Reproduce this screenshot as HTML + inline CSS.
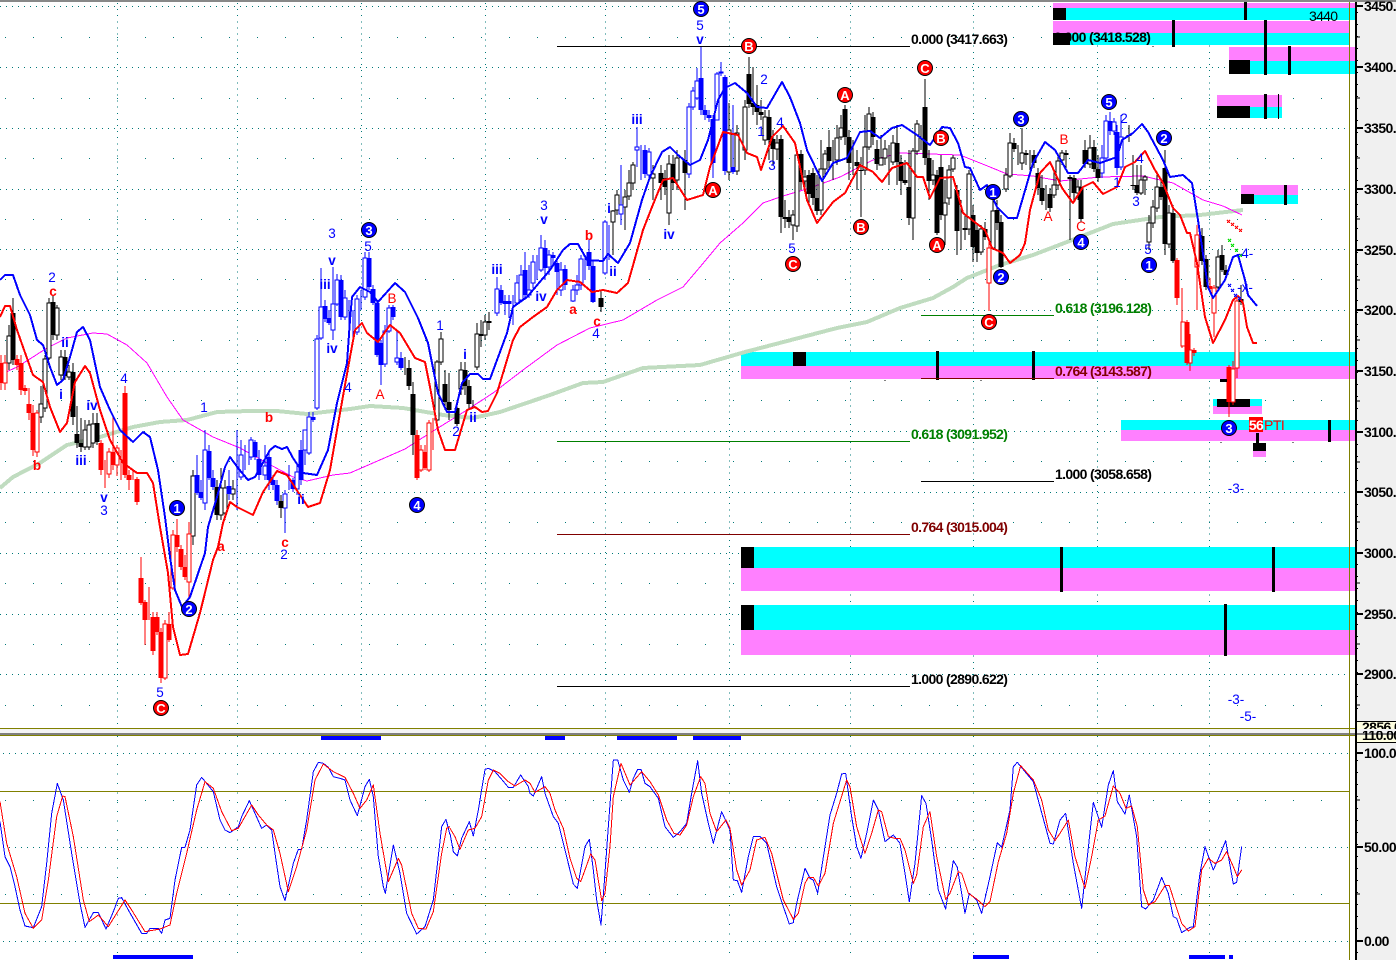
<!DOCTYPE html>
<html><head><meta charset="utf-8"><title>Chart</title>
<style>
html,body{margin:0;padding:0;background:#fff;width:1396px;height:960px;overflow:hidden}
svg{display:block}
text{font-family:"Liberation Sans",sans-serif;font-size:13.5px}
.bl{fill:#0000ff;text-anchor:middle;transform:translateY(1px)}
.rd{fill:#ff0000;text-anchor:middle;transform:translateY(1px)}
.b{font-weight:bold}
.f{font-weight:bold;font-size:14px;letter-spacing:-.65px}
.c{fill:#fff;font-weight:bold;text-anchor:middle;font-size:13px}
.ax{font-size:14px;font-weight:bold;fill:#000;letter-spacing:-.6px}
.g path,.g rect,.g polyline,.g line{shape-rendering:crispEdges}
</style></head><body>
<svg class="g" width="1396" height="960" viewBox="0 0 1396 960" xmlns="http://www.w3.org/2000/svg">
<rect width="1396" height="960" fill="#fff"/>
<!-- axis strip -->
<rect x="1357" y="0" width="39" height="960" fill="#f0f0f0"/>
<!-- main grid -->
<path fill="none" stroke="#007878" stroke-dasharray="1 5" d="M0 6.5H1349M0 67.5H1349M0 128.5H1349M0 189.5H1349M0 249.5H1349M0 310.5H1349M0 371.5H1349M0 431.5H1349M0 492.5H1349M0 553.5H1349M0 614.5H1349M0 674.5H1349"/>
<path fill="none" stroke="#007878" stroke-dasharray="1 27" d="M5 37.5H1349M5 98.5H1349M5 158.5H1349M5 219.5H1349M5 279.5H1349M5 340.5H1349M5 400.5H1349M5 461.5H1349M5 522.5H1349M5 583.5H1349M5 644.5H1349M5 705.5H1349"/>
<path fill="none" stroke="#007878" stroke-dasharray="1 5.1" d="M117.5 3V728M237.5 3V728M361.5 3V728M485.5 3V728M605.5 3V728M729.5 3V728M850.5 3V728M973.5 3V728M1097.5 3V728M1209.5 3V728"/>
<!-- lower grid -->
<path fill="none" stroke="#007878" stroke-dasharray="1 5" d="M3 753.5H1349M3 847.5H1349M3 941.5H1349"/>
<path fill="none" stroke="#007878" stroke-dasharray="1 27" d="M5 800.5H1349M5 894.5H1349"/>
<path fill="none" stroke="#007878" stroke-dasharray="1 8.4" d="M117.5 736V960M237.5 736V960M361.5 736V960M485.5 736V960M605.5 736V960M729.5 736V960M850.5 736V960M973.5 736V960M1097.5 736V960M1209.5 736V960"/>
<path fill="none" stroke="#808000" d="M0 791.5H1349M0 903.5H1349"/>

<!-- zones -->
<rect x="1053" y="3" width="303" height="5" fill="#ff80ff"/><rect x="1053" y="8" width="303" height="12" fill="#00ffff"/><rect x="1053" y="8" width="13" height="12" fill="#000"/>
<rect x="1053" y="21" width="297" height="12" fill="#ff80ff"/><rect x="1053" y="33" width="297" height="12" fill="#00ffff"/><rect x="1053" y="33" width="17" height="12" fill="#000"/>
<rect x="1229" y="47" width="127" height="14" fill="#ff80ff"/><rect x="1229" y="61" width="127" height="13" fill="#00ffff"/><rect x="1229" y="60" width="21" height="14" fill="#000"/>
<rect x="1217" y="95" width="65" height="12" fill="#ff80ff"/><rect x="1217" y="107" width="65" height="11" fill="#00ffff"/><rect x="1217" y="106" width="33" height="12" fill="#000"/>
<rect x="1241" y="185" width="57" height="10" fill="#ff80ff"/><rect x="1241" y="195" width="57" height="9" fill="#00ffff"/><rect x="1241" y="194" width="13" height="10" fill="#000"/>
<rect x="741" y="352" width="615" height="14" fill="#00ffff"/><rect x="741" y="366" width="615" height="13" fill="#ff80ff"/><rect x="793" y="352" width="13" height="14" fill="#000"/>
<rect x="1121" y="420" width="235" height="10" fill="#00ffff"/><rect x="1121" y="430" width="235" height="11" fill="#ff80ff"/>
<rect x="1213" y="399" width="49" height="7" fill="#00ffff"/><rect x="1213" y="406" width="49" height="8" fill="#ff80ff"/><rect x="1217" y="399" width="33" height="8" fill="#000"/>
<rect x="1253" y="443" width="13" height="8" fill="#000"/><rect x="1253" y="451" width="13" height="6" fill="#ff80ff"/>
<rect x="741" y="547" width="615" height="21" fill="#00ffff"/><rect x="741" y="568" width="615" height="23" fill="#ff80ff"/><rect x="741" y="547" width="13" height="21" fill="#000"/>
<rect x="741" y="605" width="615" height="25" fill="#00ffff"/><rect x="741" y="630" width="615" height="25" fill="#ff80ff"/><rect x="741" y="605" width="13" height="25" fill="#000"/>
<path fill="none" stroke="#000" stroke-width="3" d="M1245.5 0V20M1173.5 20V47M1265.5 20V47M1265.5 46V75M1289.5 46V75M1265.5 94V119M1285.5 185V205M937.5 351V380M1033.5 351V380M1329.5 420V442M1257.5 433V443M1061.5 547V592M1273.5 547V592M1225.5 604V656"/>
<path fill="none" stroke="#000" d="M1278.5 94V119M885 380v1M981 380v1M1153 46v1M1221 442v1M1293 442v1"/>

<!-- fib lines -->
<path fill="none" stroke="#000" d="M557 46.5H910M557 686.5H910M921 481.5H1054"/>
<path fill="none" stroke="#008000" d="M921 315.5H1054M557 441.5H910"/>
<path fill="none" stroke="#800000" d="M921 378.5H1054M557 534.5H910"/>

<!-- moving averages -->
<polyline fill="none" stroke="#c0dcc0" stroke-width="4" points="0,488 13,477 40,463 67,445 100,437 133,427 160,422 187,420 217,412 250,411 277,411 307,414 350,409 370,406 403,408 443,415 473,418 500,412 550,395 583,383 603,382 643,368 700,365 745,352 837,328 867,322 900,308 933,298 953,287 967,278 1000,265 1033,255 1067,242 1113,224 1160,217 1200,215 1243,210"/>
<polyline fill="none" stroke="#ff00ff" stroke-width="1" points="0,375 17,367 33,357 47,348 67,338 93,333 107,334 127,345 147,363 167,397 183,420 213,437 240,448 267,463 293,477 307,481 333,475 350,473 405,449 430,433 467,410 493,393 523,370 557,345 590,328 623,320 657,300 683,287 700,267 720,243 743,223 763,203 783,196 810,188 840,177 873,160 900,153 960,155 990,167 1007,174 1033,176 1060,181 1100,177 1143,176 1173,183 1203,200 1223,206 1242,215"/>

<!-- wicks -->
<path fill="none" stroke="#000" d="M9 325V370M13 298V365M41 386V423M45 355V412M49 298V360M53 295V340M57 305V340M61 350V380M65 350V380M69 365V380M73 363V425M77 406V448M81 418V452M85 420V450M89 420V450M93 413V448M97 413V445M193 470V545M217 480V520M221 468V520M225 480V520M233 480V500M281 495V518M405 357V375M409 360V390M413 382V455M437 360V425M441 332V365M445 370V410M449 373V420M457 400V426M461 362V395M465 362V395M469 380V410M473 400V408M477 323V370M481 320V347M485 315V340M489 312V330M601 290V312M613 210V255M617 190V215M625 190V230M629 170V200M633 162V190M653 165V200M661 165V200M665 170V195M669 155V225M673 155V190M677 150V190M685 150V210M729 103V180M737 125V175M745 100V160M749 57V108M753 67V115M757 85V125M761 100V120M765 110V145M769 110V160M773 130V165M777 135V160M781 135V233M785 200V228M789 210V228M793 210V240M797 150V232M801 150V190M805 170V190M809 170V205M813 168V205M817 175V215M821 140V215M825 150V175M829 130V170M833 140V180M837 125V165M841 115V140M845 105V145M849 130V180M853 140V175M857 150V190M861 157V217M865 115V175M869 107V150M873 112V145M877 140V170M881 135V165M885 140V165M889 145V185M893 135V165M897 125V185M901 155V195M905 160V185M909 150V225M913 148V240M917 120V155M921 125V150M925 79V165M929 150V200M933 160V185M937 170V235M941 155V220M945 180V245M949 165V205M953 155V172M957 185V255M961 200V250M965 215V240M969 170V235M973 205V262M977 225V262M981 225V255M985 222V240M993 200V250M997 200V230M1001 215V268M1006 168V192M1010 133V178M1014 138V152M1018 145V165M1022 128V170M1026 150V165M1030 150V170M1034 150V168M1038 168V195M1042 175V205M1046 185V210M1050 188V212M1054 170V198M1058 155V190M1062 150V165M1066 150V168M1070 175V240M1074 175V200M1078 180V200M1081 180V222M1085 140V168M1090 135V168M1094 140V172M1098 155V182M1129 125V142M1133 155V190M1137 165V195M1141 165V195M1145 175V195M1149 215V250M1153 200V228M1157 175V212M1161 180V200M1165 150V255M1169 205V248M1173 205V263M1202 228V265M1206 255V290M1218 250V290M1222 245V272M1226 265V278M1241 285V305"/>
<path fill="none" stroke="#0000ff" d="M197 455V495M201 480V500M205 430V510M209 445V480M213 470V490M229 470V500M237 430V510M241 440V480M245 445V470M249 440V465M251 437V460M255 440V460M259 450V480M265 445V480M269 450V490M273 475V490M277 480V505M285 490V533M289 465V490M293 478V492M297 465V495M301 440V485M305 430V465M309 412V455M313 412V422M317 335V410M321 268V340M325 300V322M329 310V325M333 267V340M337 274V306M341 275V320M345 290V320M349 300V345M353 310V340M357 295V335M361 290V310M365 252V300M369 252V290M373 285V305M377 300V357M381 340V385M385 325V367M389 305V333M393 305V320M397 330V365M401 352V370M497 277V316M501 285V305M505 295V315M509 295V318M513 295V325M517 275V305M521 265V300M525 252V300M529 265V298M533 255V288M537 255V280M541 235V272M545 240V280M549 250V275M553 252V265M557 260V295M561 262V296M565 265V290M573 285V302M577 275V295M581 255V290M585 255V280M589 240V270M593 260V303M605 220V275M609 225V260M621 165V225M637 127V167M641 145V180M645 145V178M649 148V180M689 103V178M693 87V110M697 68V100M701 47V115M705 105V120M709 110V122M713 115V178M717 72V120M721 62V76M725 75V175M733 105V174M1102 145V178M1106 115V160M1110 112V135M1114 118V135M1117 125V175M1121 115V170"/>
<path fill="none" stroke="#ff0000" d="M1 355V390M5 355V390M17 355V370M21 355V395M25 385V395M29 388V420M33 405V456M37 410V457M101 440V475M105 460V488M109 448V478M113 415V470M117 445V476M121 450V480M125 386V478M129 470V490M133 470V480M137 477V505M141 557V605M145 600V645M149 587V620M153 612V655M157 612V635M161 628V683M165 620V680M169 612V642M173 530V590M177 519V552M181 545V570M185 555V580M189 522V597M417 430V480M421 445V472M425 445V470M429 420V472M433 418V450M989 240V311M1177 258V305M1182 288V348M1187 320V365M1190 334V371M1194 348V356M1197 225V310M1210 278V292M1214 285V337M1229 365V417M1233 361V405M1237 298V378"/>

<!-- white bodies -->
<path fill="#fff" stroke="#000" d="M7 336h4V363h-4zM39 404h4V417h-4zM43 359h4V408h-4zM47 303h4V358h-4zM55 308h4V335h-4zM59 357h4V375h-4zM67 372h4V377h-4zM83 430h4V447h-4zM87 425h4V447h-4zM91 424h4V443h-4zM191 476h4V536h-4zM219 488h4V515h-4zM223 488h4V513h-4zM231 489h4V494h-4zM435 362h4V420h-4zM439 339h4V362h-4zM459 370h4V389h-4zM475 334h4V367h-4zM483 322h4V335h-4zM611 211h4V222h-4zM615 195h4V210h-4zM623 197h4V207h-4zM627 183h4V196h-4zM631 165h4V183h-4zM651 174h4V178h-4zM667 164h4V213h-4zM675 158h4V180h-4zM727 130h4V172h-4zM735 133h4V171h-4zM743 107h4V150h-4zM763 117h4V140h-4zM775 143h4V149h-4zM791 215h4V225h-4zM795 155h4V226h-4zM803 177h4V181h-4zM819 169h4V210h-4zM823 154h4V169h-4zM835 138h4V160h-4zM839 128h4V137h-4zM863 147h4V170h-4zM867 114h4V147h-4zM879 158h4V165h-4zM883 149h4V158h-4zM891 143h4V162h-4zM911 151h4V218h-4zM915 124h4V151h-4zM931 175h4V180h-4zM943 203h4V215h-4zM947 170h4V198h-4zM951 158h4V169h-4zM967 174h4V229h-4zM979 229h4V252h-4zM991 211h4V248h-4zM1004 175h4V189h-4zM1008 143h4V176h-4zM1020 153h4V163h-4zM1052 185h4V195h-4zM1056 161h4V185h-4zM1060 153h4V160h-4zM1076 187h4V193h-4zM1088 148h4V164h-4zM1139 180h4V193h-4zM1143 177h4V180h-4zM1147 223h4V242h-4zM1151 207h4V223h-4zM1155 187h4V208h-4zM1167 213h4V244h-4zM1216 257h4V287h-4z"/>
<path fill="#fff" stroke="#0000ff" d="M203 450h4V503h-4zM239 455h4V477h-4zM249 440h4V457h-4zM263 466h4V475h-4zM283 494h4V508h-4zM295 472h4V489h-4zM303 430h4V450h-4zM307 417h4V453h-4zM315 339h4V408h-4zM319 307h4V338h-4zM331 304h4V330h-4zM335 280h4V304h-4zM343 298h4V317h-4zM355 299h4V332h-4zM363 258h4V297h-4zM383 331h4V364h-4zM387 308h4V331h-4zM395 358h4V362h-4zM495 289h4V313h-4zM515 283h4V303h-4zM519 275h4V300h-4zM527 290h4V295h-4zM531 262h4V283h-4zM539 248h4V270h-4zM547 255h4V267h-4zM559 270h4V290h-4zM571 290h4V301h-4zM575 285h4V290h-4zM579 259h4V285h-4zM603 222h4V273h-4zM619 205h4V214h-4zM635 147h4V150h-4zM647 152h4V175h-4zM687 107h4V174h-4zM691 91h4V107h-4zM695 81h4V98h-4zM715 74h4V120h-4zM719 72h4V73h-4zM1100 158h4V173h-4zM1104 121h4V158h-4zM1112 122h4V131h-4zM1119 137h4V167h-4z"/>
<path fill="#fff" stroke="#ff0000" d="M3 363h4V383h-4zM35 413h4V452h-4zM107 452h4V474h-4zM115 448h4V465h-4zM163 624h4V678h-4zM171 535h4V588h-4zM187 534h4V582h-4zM419 450h4V470h-4zM427 423h4V470h-4zM987 248h4V283h-4zM1181 322h4V346h-4zM1188 350h4V363h-4zM1195 235h4V267h-4zM1212 288h4V313h-4zM1231 369h4V402h-4zM1235 301h4V368h-4z"/>

<!-- filled bodies -->
<path fill="none" stroke="#000" stroke-width="5" d="M13 313V360M53 302V335M65 357V376M73 372V417M77 434V443M81 443V447M97 423V442M217 487V515M281 501V508M409 368V386M413 394V435M445 384V402M449 402V410M457 408V424M465 370V386M469 386V404M481 334V336M489 321V323M601 298V307M661 173V183M665 178V187M673 164V183M685 160V173M749 74V104M753 103V107M757 105V112M761 112V115M769 117V140M773 139V149M781 139V217M785 217V219M789 217V222M801 154V182M809 175V194M813 173V198M817 198V211M829 147V161M845 109V137M849 137V163M857 162V166M861 170V171M873 117V137M877 149V164M897 143V162M901 162V181M905 180V183M909 187V218M925 107V158M929 158V181M937 175V233M941 167V215M957 190V231M965 228V230M973 215V247M977 230V253M985 229V237M997 210V223M1001 222V267M1014 143V149M1026 153V155M1034 155V163M1038 173V188M1042 188V201M1050 194V208M1066 153V155M1070 177V179M1074 178V193M1081 187V219M1085 150V164M1094 147V169M1098 169V178M1129 135V136M1133 185V186M1137 185V193M1161 187V197M1165 168V244M1173 213V261M1202 236V261M1206 259V287M1222 255V270M1226 270V275M1241 299V302"/>
<path fill="none" stroke="#0000ff" stroke-width="5" d="M197 475V493M201 492V498M209 451V478M213 478V487M229 486V494M255 442V457M259 459V475M269 457V480M273 480V485M277 485V501M293 480V489M301 450V480M313 417V420M325 306V319M329 318V323M341 280V317M369 258V287M373 289V303M377 303V355M381 343V365M393 307V317M401 358V368M501 290V303M505 301V304M509 301V304M525 270V295M545 248V268M553 255V258M557 263V272M565 269V285M589 252V266M593 266V302M645 150V174M701 78V110M705 110V115M709 115V118M713 119V163M725 77V171M733 167V172M1110 121V131M1117 132V168"/>
<path fill="none" stroke="#ff0000" stroke-width="5" d="M1 363V383M17 359V365M21 363V390M25 388V391M29 404V413M33 413V450M101 443V470M113 452V465M125 393V475M129 475V480M137 479V502M141 578V603M145 602V620M153 617V651M157 617V632M161 632V678M169 624V640M177 535V547M181 549V567M185 567V577M417 435V478M425 452V468M1177 260V298M1187 322V363M1194 350V353M1210 286V289M1229 367V402"/>
<rect x="1220" y="379" width="7" height="3" fill="#000"/>

<!-- bands -->
<polyline fill="none" stroke="#0000ff" stroke-width="2" stroke-linejoin="round" points="0,280 5,275 13,275 20,295 30,315 37,340 43,345 50,367 57,385 63,380 70,357 77,332 83,327 90,340 100,387 110,410 120,430 133,442 143,432 150,437 158,470 165,517 170,557 175,590 182,607 190,597 205,553 208,527 217,497 225,467 230,457 238,468 248,480 255,477 270,450 275,446 282,449 287,447 293,458 303,473 317,475 328,450 337,403 347,363 350,320 352,297 360,287 370,292 378,302 395,283 405,292 418,318 428,343 438,393 447,412 455,412 462,383 470,374 478,374 483,379 490,379 507,333 513,307 527,297 550,270 563,250 570,244 578,244 587,260 603,261 608,254 618,263 630,243 642,200 650,177 662,152 670,147 678,155 690,165 700,160 708,140 718,100 725,88 735,83 747,93 757,107 767,108 782,82 790,97 800,123 807,150 822,181 833,163 847,158 860,132 870,131 880,138 892,128 902,125 917,135 930,145 942,127 950,128 958,143 965,167 970,168 980,190 987,185 997,207 1008,218 1017,218 1033,163 1045,142 1055,150 1068,173 1078,173 1088,160 1100,163 1117,157 1122,140 1133,133 1142,124 1148,132 1163,160 1170,177 1183,175 1192,183 1198,220 1208,287 1213,298 1225,280 1233,257 1238,255 1245,280 1248,295 1257,306"/>
<polyline fill="none" stroke="#ff0000" stroke-width="2" stroke-linejoin="round" points="0,317 5,306 10,306 17,330 23,347 33,375 43,382 50,407 60,432 67,423 75,382 85,366 90,373 100,410 110,440 123,463 137,473 147,473 153,483 160,527 168,573 173,627 180,655 188,654 200,613 213,560 218,547 223,523 230,502 237,507 253,515 263,492 277,471 287,475 298,492 308,507 320,503 330,470 340,413 350,357 355,330 362,323 367,333 378,342 390,325 400,333 415,358 425,362 430,387 438,430 445,450 455,450 467,410 475,407 482,412 488,411 497,393 513,340 520,327 533,317 547,307 557,290 567,280 580,282 592,292 603,290 617,293 628,283 643,230 652,207 663,180 673,178 687,200 703,195 710,167 723,132 738,135 747,153 757,157 761,170 772,137 783,126 795,143 807,200 817,223 833,202 845,193 860,165 873,172 882,182 892,168 907,163 917,177 923,177 930,198 940,178 953,177 963,213 972,220 985,230 992,248 1003,253 1010,263 1020,255 1025,243 1030,210 1040,173 1050,162 1062,188 1073,203 1083,187 1093,182 1103,194 1117,187 1125,167 1135,162 1145,151 1155,170 1163,183 1173,208 1180,215 1187,233 1190,233 1197,263 1205,317 1213,343 1225,320 1233,300 1238,296 1243,303 1247,327 1253,343 1257,343"/>

<!-- small x paths -->
<path fill="none" stroke="#ff0000" d="M1227 220l3 3m0-3l-3 3M1231 223l3 3m0-3l-3 3M1235 226l3 3m0-3l-3 3M1239 229l3 3m0-3l-3 3"/>
<path fill="none" stroke="#00dd00" d="M1228 239l3 3m0-3l-3 3M1231 244l3 3m0-3l-3 3M1235 249l3 3m0-3l-3 3M1239 254l3 3m0-3l-3 3"/>
<path fill="none" stroke="#0000ff" d="M1228 284l3 3m0-3l-3 3M1231 289l3 3m0-3l-3 3M1234 294l3 3m0-3l-3 3M1238 297l3 3m0-3l-3 3"/>

<!-- frame -->
<rect x="0" y="0" width="1396" height="2" fill="#888"/>
<rect x="0" y="728" width="1356" height="1" fill="#808000"/>
<rect x="0" y="729" width="1396" height="4" fill="#f4f4f4"/>
<rect x="0" y="733" width="1396" height="2" fill="#808080"/>
<rect x="0" y="735" width="1356" height="1" fill="#808000"/>
<rect x="1349" y="2" width="1" height="958" fill="#808000"/>
<rect x="1355" y="2" width="2" height="958" fill="#000"/>
<rect x="1357" y="721" width="39" height="8" fill="#ffffe0"/><rect x="1357" y="721" width="39" height="1" fill="#000"/>
<rect x="1357" y="735" width="39" height="7" fill="#ffffe0"/><rect x="1357" y="742" width="39" height="1" fill="#000"/>

<!-- blue pane bars -->
<path fill="#0000ff" d="M321 736h60v4h-60zM545 736h20v4h-20zM617 736h60v4h-60zM693 736h48v4h-48zM113 955h80v4h-80zM973 955h36v4h-36zM1189 955h36v4h-36zM1229 955h4v4h-4z"/>

<!-- oscillator -->
<g transform="translate(0,730) scale(.33333)" fill="none" stroke-width="3" stroke-linejoin="round">
<polyline stroke="#0000ff" points="0,275 15,380 30,410 45,470 60,540 75,588 100,593 125,530 140,400 155,250 172,160 190,210 215,370 240,520 255,592 280,548 295,548 318,597 340,545 355,505 365,503 385,540 425,610 440,610 450,595 475,595 485,610 495,570 510,565 525,450 545,352 555,352 570,300 590,165 605,142 640,185 660,270 675,300 690,308 715,290 725,260 748,212 785,295 800,285 815,300 825,370 840,470 855,512 880,400 895,358 905,358 920,270 940,125 955,97 970,100 985,112 1000,140 1020,145 1035,150 1050,210 1072,257 1095,170 1108,148 1120,200 1135,380 1150,470 1156,490 1180,345 1200,430 1220,550 1250,612 1275,590 1300,510 1325,290 1338,268 1350,315"/>
<polyline stroke="#ff0000" points="0,215 20,340 50,440 75,550 100,595 125,570 145,450 170,260 188,198 195,200 220,320 250,510 268,575 295,555 325,590 350,550 375,510 395,540 435,605 480,597 510,585 530,490 560,370 590,240 615,155 640,175 665,245 695,302 715,295 755,225 775,255 800,285 820,300 840,370 865,485 890,410 920,300 945,150 970,102 1000,125 1035,142 1060,190 1080,235 1100,210 1120,165 1140,310 1165,455 1195,385 1205,405 1235,550 1255,595 1278,597 1300,545 1325,370 1340,295 1350,290"/>
<g transform="translate(1350,0)">
<polyline stroke="#0000ff" points="0,310 10,365 22,378 35,325 58,275 70,318 85,240 105,118 115,115 135,125 155,148 175,172 190,172 212,135 235,170 240,190 250,198 275,140 285,190 310,260 325,280 350,380 370,462 382,475 405,350 418,328 430,420 440,510 453,585 462,470 475,290 490,90 503,90 520,150 538,187 550,145 563,118 573,118 585,160 600,170 625,205 645,290 670,322 690,305 710,280 725,190 743,92 755,190 775,280 790,340 815,245 840,300 850,450 862,452 875,487 895,380 910,320 930,320 950,340 980,470 1000,530 1018,582 1030,578 1040,520 1065,415 1080,445 1090,450 1103,490 1125,350 1140,255 1160,190 1175,132 1187,130 1205,260 1220,350 1233,385 1250,310 1270,210 1285,240 1305,335 1330,315 1350,340"/>
<polyline stroke="#ff0000" points="0,295 15,320 30,358 55,300 75,295 95,260 115,150 130,120 150,130 175,155 195,168 225,150 240,160 255,187 285,170 300,190 315,240 340,295 360,385 380,445 392,455 405,420 422,372 435,390 455,512 465,490 480,350 490,200 513,100 540,165 575,125 600,155 625,195 650,270 672,310 690,315 710,285 730,200 752,140 765,160 780,250 800,305 828,270 840,295 860,420 875,465 900,420 920,330 945,322 965,370 1000,510 1030,568 1045,550 1065,460 1075,442 1090,442 1105,468 1125,430 1150,280 1190,150 1200,170 1220,290 1245,370 1265,310 1285,240 1295,245 1315,320 1335,325 1350,325"/>
</g>
<g transform="translate(2700,0)">
<polyline stroke="#0000ff" points="0,340 15,430 28,515 45,400 65,197 78,220 95,330 115,480 137,537 160,392 172,412 195,550 208,490 230,510 245,550 270,440 292,338 305,352 330,240 340,110 352,97 375,125 400,155 420,230 450,340 460,342 480,270 497,250 520,400 545,535 580,217 605,292 625,165 640,122 652,215 675,252 688,195 710,320 725,530 737,537 760,510 785,442 805,490 820,560 830,565 845,608 870,592 880,590 900,430 915,350 940,420 960,375 977,332 1000,462 1010,457 1025,350"/>
<polyline stroke="#ff0000" points="0,325 15,360 40,460 50,435 70,290 90,245 110,380 137,508 150,490 175,425 185,430 205,490 230,507 255,530 270,515 295,395 320,310 340,190 362,107 400,150 425,210 445,300 465,332 480,310 505,270 525,380 555,475 575,380 595,270 615,258 640,168 660,190 678,235 695,228 712,290 730,480 745,525 765,515 795,467 808,467 825,520 845,580 865,603 885,590 905,420 925,385 945,400 965,390 980,365 1000,410 1012,440 1025,420"/>
</g>
</g>

<!-- axis ticks -->
<path fill="none" stroke="#000" stroke-width="2" d="M1357 6h6M1357 67h6M1357 128h6M1357 189h6M1357 250h6M1357 310h6M1357 371h6M1357 432h6M1357 492h6M1357 553h6M1357 614h6M1357 674h6M1357 753h6M1357 847h6M1357 941h6"/>
<path fill="none" stroke="#000" d="M1357 37h3M1357 98h3M1357 158h3M1357 219h3M1357 280h3M1357 340h3M1357 401h3M1357 462h3M1357 522h3M1357 583h3M1357 644h3M1357 705h3M1357 800h3M1357 894h3"/>
<path fill="none" stroke="#000" stroke-dasharray="1 11" d="M1357.5 12V720M1357.5 760V960"/>

<!-- axis labels -->
<text class="ax" x="1364" y="11">3450.00</text>
<text class="ax" x="1364" y="72">3400.00</text>
<text class="ax" x="1364" y="133">3350.00</text>
<text class="ax" x="1364" y="194">3300.00</text>
<text class="ax" x="1364" y="255">3250.00</text>
<text class="ax" x="1364" y="315">3200.00</text>
<text class="ax" x="1364" y="376">3150.00</text>
<text class="ax" x="1364" y="437">3100.00</text>
<text class="ax" x="1364" y="497">3050.00</text>
<text class="ax" x="1364" y="558">3000.00</text>
<text class="ax" x="1364" y="619">2950.00</text>
<text class="ax" x="1364" y="679">2900.00</text>
<svg x="1357" y="721" width="39" height="8"><text class="ax" x="5" y="11">2856.02</text></svg>
<svg x="1357" y="731" width="39" height="11"><text class="ax" x="5" y="9">110.00</text></svg>
<text class="ax" x="1364" y="758">100.00</text>
<text class="ax" x="1364" y="852">50.00</text>
<text class="ax" x="1364" y="946">0.00</text>

<!-- fib text -->
<text class="f" x="911" y="44" fill="#000">0.000 (3417.663)</text>
<text class="f" x="1054" y="42" fill="#000">0.000 (3418.528)</text>
<text class="f" x="1055" y="313" fill="#008000">0.618 (3196.128)</text>
<text class="f" x="1055" y="376" fill="#800000">0.764 (3143.587)</text>
<text class="f" x="911" y="439" fill="#008000">0.618 (3091.952)</text>
<text class="f" x="1055" y="479" fill="#000">1.000 (3058.658)</text>
<text class="f" x="911" y="532" fill="#800000">0.764 (3015.004)</text>
<text class="f" x="911" y="684" fill="#000">1.000 (2890.622)</text>
<text x="1309" y="21" fill="#000" style="font-size:14px;letter-spacing:-.7px">3440</text>

<!-- blue labels -->
<text class="bl" x="52" y="281">2</text><text class="bl b" x="65" y="346">ii</text><text class="bl b" x="61" y="398">i</text><text class="bl b" x="81" y="464">iii</text><text class="bl b" x="92" y="409">iv</text><text class="bl b" x="104" y="501">v</text><text class="bl" x="104" y="514">3</text><text class="bl" x="124" y="382">4</text><text class="bl" x="204" y="411">1</text><text class="bl" x="332" y="237">3</text><text class="bl b" x="332" y="264">v</text><text class="bl b" x="325" y="288">iii</text><text class="bl b" x="332" y="352">iv</text><text class="bl" x="348" y="391">4</text><text class="bl" x="284" y="558">2</text><text class="bl b" x="301" y="503">ii</text><text class="bl" x="160" y="696">5</text>
<text class="bl" x="368" y="250">5</text><text class="bl" x="440" y="329">1</text><text class="bl b" x="465" y="358">i</text><text class="bl" x="456" y="435">2</text><text class="bl b" x="473" y="421">ii</text><text class="bl b" x="497" y="273">iii</text><text class="bl" x="544" y="209">3</text><text class="bl b" x="544" y="223">v</text><text class="bl b" x="541" y="300">iv</text><text class="bl" x="596" y="337">4</text><text class="bl b" x="609" y="212">i</text><text class="bl b" x="613" y="275">ii</text><text class="bl b" x="637" y="123">iii</text><text class="bl b" x="669" y="238">iv</text>
<text class="bl" x="700" y="29">5</text><text class="bl b" x="700" y="43">v</text><text class="bl" x="764" y="83">2</text><text class="bl" x="761" y="135">1</text><text class="bl" x="780" y="126">4</text><text class="bl" x="772" y="169">3</text><text class="bl" x="792" y="252">5</text><text class="bl" x="1124" y="122">2</text><text class="bl" x="1117" y="186">1</text><text class="bl" x="1140" y="162">4</text><text class="bl" x="1136" y="205">3</text><text class="bl" x="1148" y="253">5</text>
<text class="bl" x="1245" y="257">-4-</text><text class="bl" x="1245" y="291">-x-</text><text class="bl" x="1236" y="492">-3-</text><text class="bl" x="1236" y="703">-3-</text><text class="bl" x="1248" y="720">-5-</text>

<!-- red labels -->
<text class="rd b" x="53" y="295">c</text><text class="rd b" x="37" y="469">b</text><text class="rd b" x="269" y="421">b</text><text class="rd b" x="221" y="550">a</text><text class="rd b" x="285" y="546">c</text><text class="rd" x="392" y="302">B</text><text class="rd" x="380" y="398">A</text><text class="rd b" x="589" y="239">b</text><text class="rd b" x="573" y="313">a</text><text class="rd b" x="597" y="325">c</text><text class="rd" x="1064" y="143">B</text><text class="rd" x="1048" y="220">A</text><text class="rd" x="1081" y="230">C</text>

<!-- circles -->
<g stroke="#000" stroke-width="1" fill="#0000ff">
<circle cx="701" cy="9" r="7.5"/><circle cx="369" cy="230" r="7.5"/><circle cx="177" cy="508" r="7.5"/><circle cx="189" cy="609" r="7.5"/><circle cx="417" cy="505" r="7.5"/><circle cx="1021" cy="119" r="7.5"/><circle cx="1109" cy="102" r="7.5"/><circle cx="1164" cy="138" r="7.5"/><circle cx="993" cy="192" r="7.5"/><circle cx="1001" cy="277" r="7.5"/><circle cx="1081" cy="242" r="7.5"/><circle cx="1149" cy="265" r="7.5"/><circle cx="1229" cy="428" r="7.5"/>
</g>
<g stroke="#000" stroke-width="1" fill="#ff0000">
<circle cx="161" cy="708" r="7.5"/><circle cx="749" cy="46" r="7.5"/><circle cx="925" cy="68" r="7.5"/><circle cx="845" cy="95" r="7.5"/><circle cx="941" cy="138" r="7.5"/><circle cx="713" cy="190" r="7.5"/><circle cx="861" cy="227" r="7.5"/><circle cx="937" cy="245" r="7.5"/><circle cx="793" cy="264" r="7.5"/><circle cx="989" cy="322" r="7.5"/>
</g>
<text class="c" x="701" y="14">5</text><text class="c" x="369" y="235">3</text><text class="c" x="177" y="513">1</text><text class="c" x="189" y="614">2</text><text class="c" x="417" y="510">4</text><text class="c" x="1021" y="124">3</text><text class="c" x="1109" y="107">5</text><text class="c" x="1164" y="143">2</text><text class="c" x="993" y="197">1</text><text class="c" x="1001" y="282">2</text><text class="c" x="1081" y="247">4</text><text class="c" x="1149" y="270">1</text><text class="c" x="1229" y="433">3</text>
<text class="c" x="161" y="713">C</text><text class="c" x="749" y="51">B</text><text class="c" x="925" y="73">C</text><text class="c" x="845" y="100">A</text><text class="c" x="941" y="143">B</text><text class="c" x="713" y="195">A</text><text class="c" x="861" y="232">B</text><text class="c" x="937" y="250">A</text><text class="c" x="793" y="269">C</text><text class="c" x="989" y="327">C</text>

<!-- 56 PTI -->
<rect x="1249" y="417" width="14" height="15" fill="#ff0000"/>
<text x="1256" y="430" fill="#fff" font-weight="bold" text-anchor="middle" style="font-size:14px;letter-spacing:-.6px">56</text>
<text x="1264" y="430" fill="#ff0000" style="font-size:14px;letter-spacing:-.5px">PTI</text>
</svg>
</body></html>
